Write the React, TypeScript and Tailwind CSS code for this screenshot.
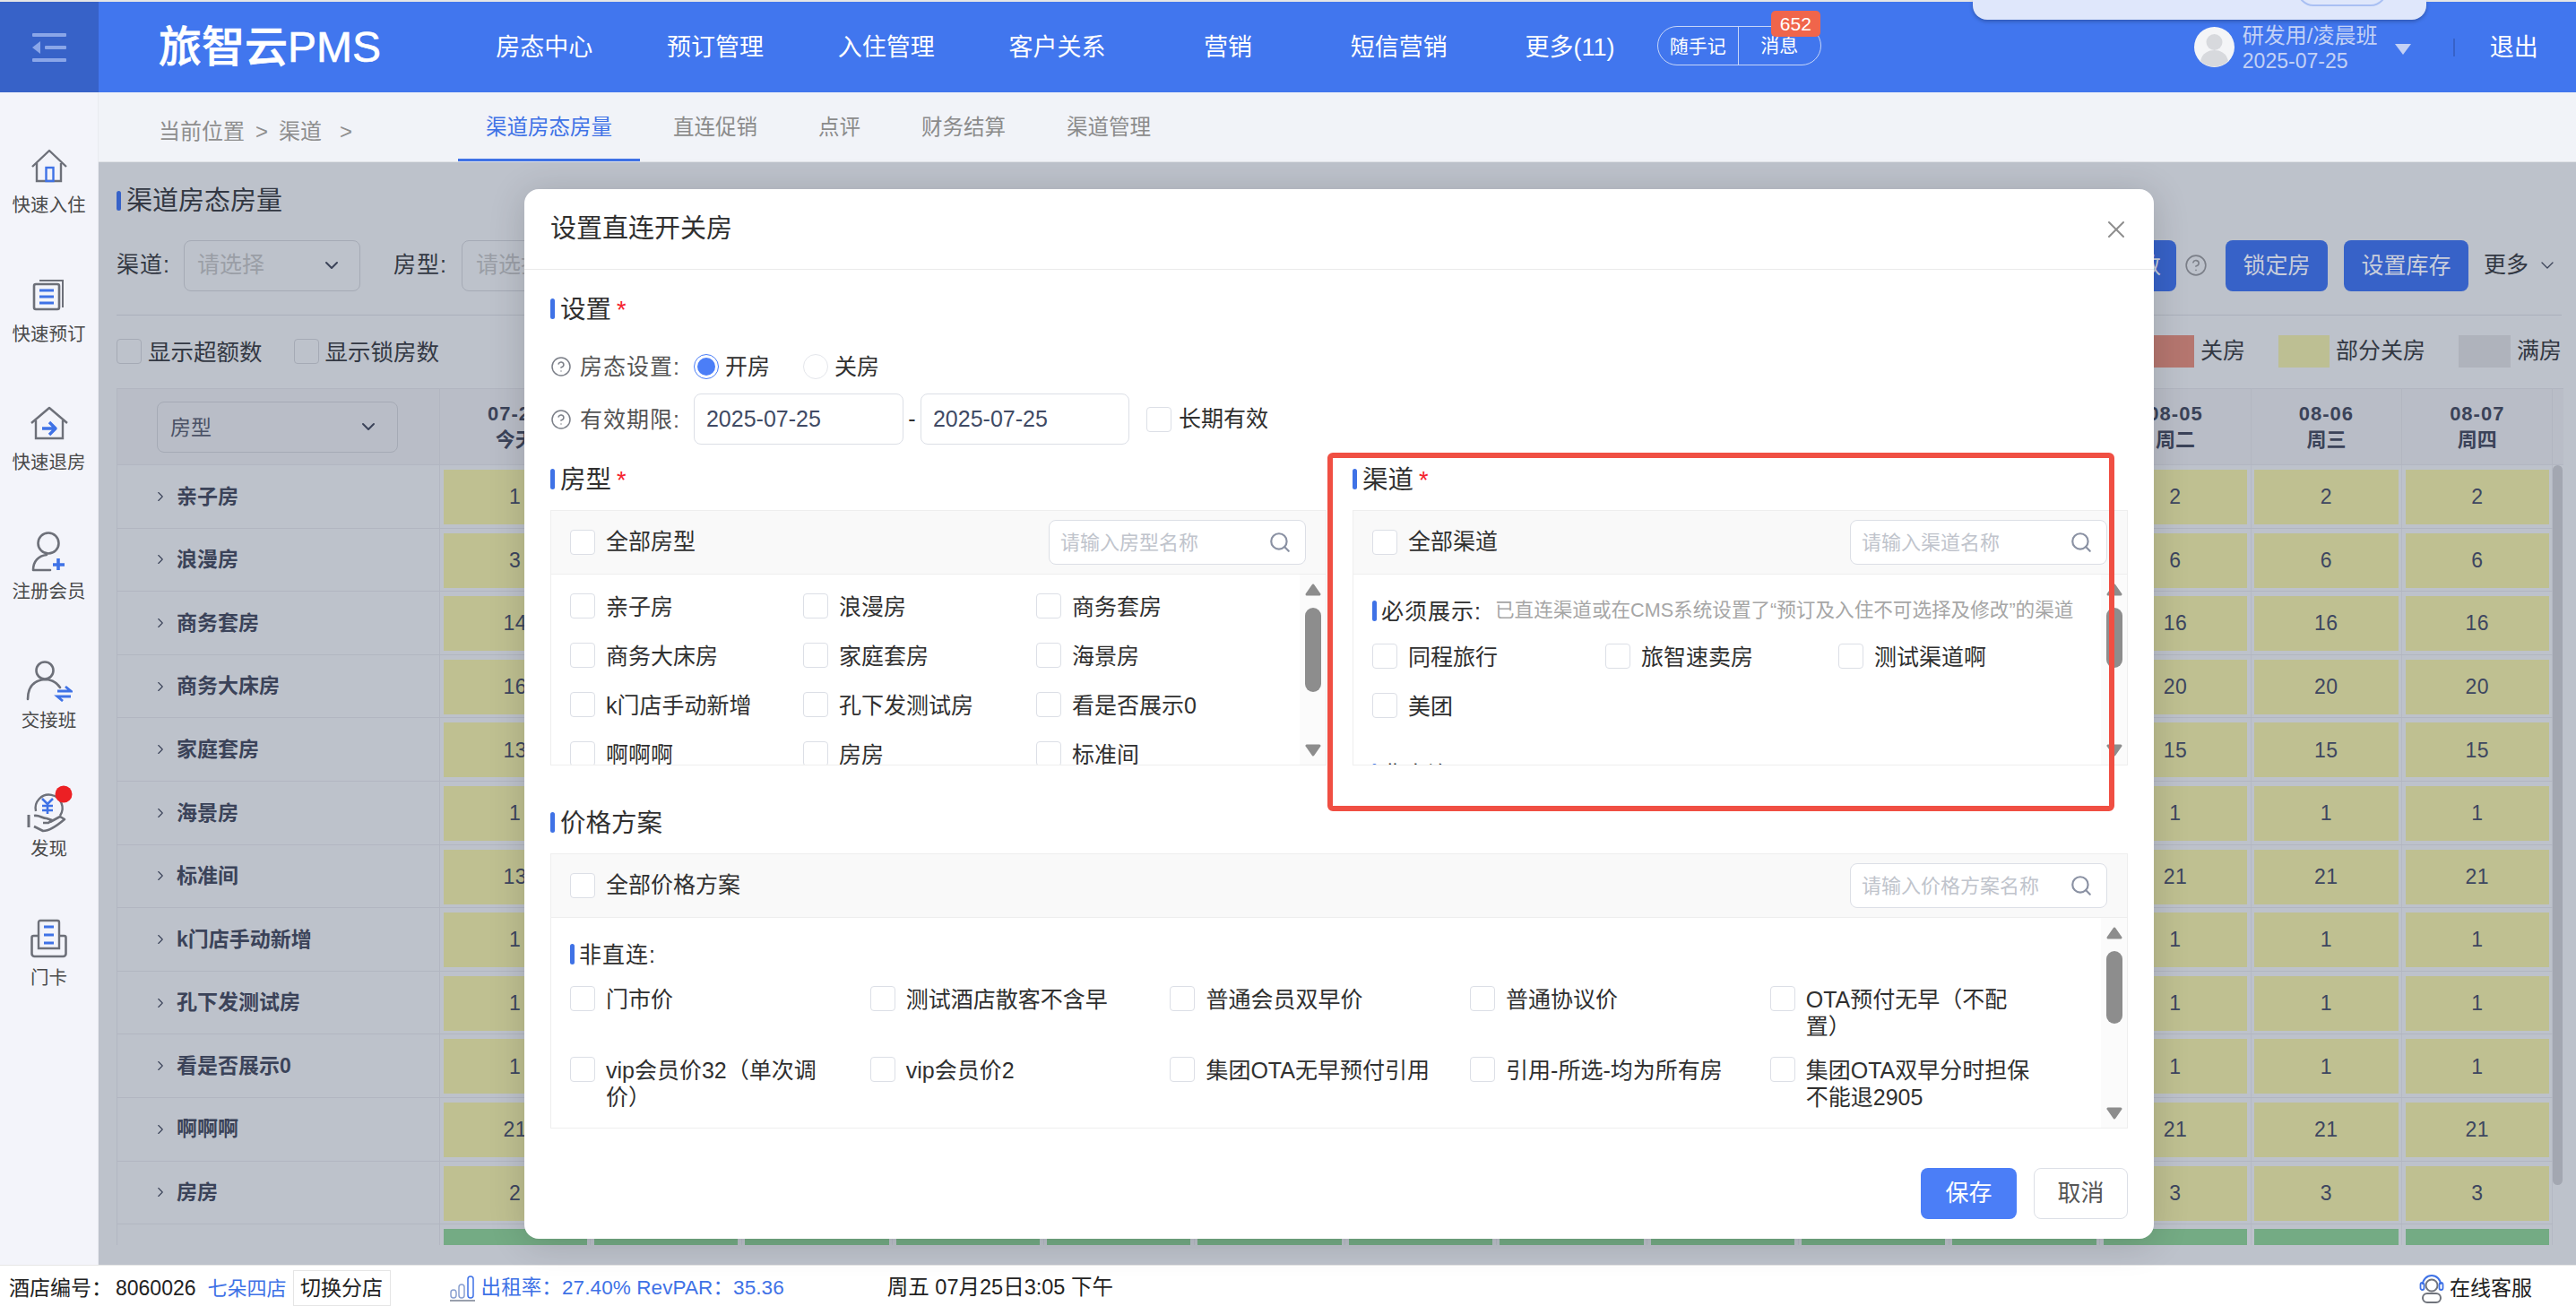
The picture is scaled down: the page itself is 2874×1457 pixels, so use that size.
import React from 'react';
import { ChevronDown, ChevronRight, CircleHelp, Search, X } from 'lucide-react';

const gray = '#6d7079';
const blue = '#3f72e6';

const HomeIcon = () => (
  <svg width="42" height="38" viewBox="0 0 42 38" fill="none">
    <path d="M2 20 21 2l19 18" stroke={gray} strokeWidth="2.4" strokeLinejoin="round" />
    <path d="M7 16v20h27V16" stroke={gray} strokeWidth="2.4" />
    <rect x="17.5" y="21" width="8" height="15" stroke={blue} strokeWidth="2.4" />
  </svg>
);

const BookIcon = () => (
  <svg width="38" height="36" viewBox="0 0 38 36" fill="none">
    <path d="M8 2h26v30" stroke={gray} strokeWidth="2" />
    <rect x="2" y="6" width="28" height="28" rx="2" stroke={gray} strokeWidth="2.6" />
    <path d="M8 13h16M8 20h16M8 27h16" stroke={blue} strokeWidth="3" />
  </svg>
);

const CheckoutIcon = () => (
  <svg width="44" height="38" viewBox="0 0 44 38" fill="none">
    <path d="M2 19 22 2l20 17" stroke={gray} strokeWidth="2.4" strokeLinejoin="round" />
    <path d="M7 16v20h30V16" stroke={gray} strokeWidth="2.4" />
    <path d="M14 25h13M22 18l7 7-7 7" stroke={blue} strokeWidth="3.4" strokeLinejoin="round" />
  </svg>
);

const UserPlusIcon = () => (
  <svg width="40" height="46" viewBox="0 0 40 46" fill="none">
    <circle cx="19" cy="13" r="11.5" stroke={gray} strokeWidth="2.6" />
    <path d="M2 43c0-10 6-16 15-17M2 43h19" stroke={gray} strokeWidth="2.6" strokeLinecap="round" />
    <path d="M30 30v13M24 37h13" stroke={blue} strokeWidth="3.6" />
  </svg>
);

const UserSwapIcon = () => (
  <svg width="52" height="46" viewBox="0 0 52 46" fill="none">
    <circle cx="21" cy="11" r="9.5" stroke={gray} strokeWidth="2.6" />
    <path d="M2 43c0-14 7-21 19-22 7 0 13 3 17 9" stroke={gray} strokeWidth="2.6" strokeLinecap="round" />
    <path d="M35 34h15l-6-5M50 40H35l6 5" stroke={blue} strokeWidth="2.8" />
  </svg>
);

const DiscoverIcon = () => (
  <svg width="52" height="54" viewBox="0 0 52 54" fill="none">
    <path d="M11 29a15 15 0 1 1 27 5" stroke={gray} strokeWidth="2.4" />
    <path d="M18 15l6 6 6-6M24 21v11M18 23h12M18 28h12" stroke={blue} strokeWidth="2.6" />
    <path d="M3 33v14" stroke={gray} strokeWidth="3" />
    <path d="M9 34c6-1 9 3 14 3l6 2-4 3h-6M9 46l10 5c7 0 17-7 24-13l-5-3-11 6" stroke={gray} strokeWidth="2.6" strokeLinejoin="round" />
    <circle cx="42" cy="10" r="9.5" fill="#ec2024" />
  </svg>
);

const CardIcon = () => (
  <svg width="44" height="44" viewBox="0 0 44 44" fill="none">
    <path d="M10 19H4.500a2 2 0 0 0-2 2v18a3 3 0 0 0 3 3h32a3 3 0 0 0 3-3V21a2 2 0 0 0-2-2H33" stroke={gray} strokeWidth="2.6" />
    <path d="M10 33V4a2 2 0 0 1 2-2h19a2 2 0 0 1 2 2v29z" stroke={gray} strokeWidth="2.4" />
    <path d="M16 9h11M16 18h11M16 27h11" stroke={blue} strokeWidth="3.2" />
  </svg>
);

const Avatar = () => (
  <svg width="45" height="45" viewBox="0 0 45 45" className="shrink-0">
    <circle cx="22.500" cy="22.500" r="22.500" fill="#f4f5f7" />
    <circle cx="22.500" cy="17" r="9" fill="#d7d9dd" />
    <path d="M7 38c2-9 9-12 15.500-12S36 29 38 38a22 22 0 0 1-31 0z" fill="#d7d9dd" />
  </svg>
);

const BarsIcon = () => (
  <svg width="30" height="30" viewBox="0 0 30 30" fill="none">
    <rect x="2" y="17" width="6" height="9" rx="3" stroke="#8aa0d0" strokeWidth="1.500" />
    <rect x="11" y="11" width="6" height="15" rx="3" stroke="#8aa0d0" strokeWidth="1.500" />
    <rect x="21" y="2" width="6" height="24" rx="3" stroke={blue} strokeWidth="1.500" />
    <path d="M1 29h28" stroke="#9aa0ad" strokeWidth="2" />
  </svg>
);

const HeadsetIcon = () => (
  <svg width="28" height="34" viewBox="0 0 28 34" fill="none">
    <path d="M4 13a10 10 0 0 1 20 0" stroke={blue} strokeWidth="2" />
    <rect x="1.500" y="11" width="4" height="8" rx="2" stroke={blue} strokeWidth="1.800" />
    <rect x="22.500" y="11" width="4" height="8" rx="2" stroke={blue} strokeWidth="1.800" />
    <circle cx="14" cy="14" r="6.500" stroke="#70747c" strokeWidth="2" />
    <rect x="4" y="23" width="20" height="10" rx="5" stroke="#70747c" strokeWidth="2" />
  </svg>
);

const sideItems = [
  { label: '快速入住', icon: <HomeIcon /> },
  { label: '快速预订', icon: <BookIcon /> },
  { label: '快速退房', icon: <CheckoutIcon /> },
  { label: '注册会员', icon: <UserPlusIcon /> },
  { label: '交接班', icon: <UserSwapIcon /> },
  { label: '发现', icon: <DiscoverIcon /> },
  { label: '门卡', icon: <CardIcon /> },
];

const navItems = ['房态中心', '预订管理', '入住管理', '客户关系', '营销', '短信营销', '更多(11)'];
const tabs = ['直连促销', '点评', '财务结算', '渠道管理'];

const dates = [
  ['07-25', '今天'], ['07-26', '周六'], ['07-27', '周日'], ['07-28', '周一'], ['07-29', '周二'],
  ['07-30', '周三'], ['07-31', '周四'], ['08-01', '周五'], ['08-02', '周六'], ['08-03', '周日'],
  ['08-04', '周一'], ['08-05', '周二'], ['08-06', '周三'], ['08-07', '周四'],
];

const tableRows: [string, number, number][] = [
  ['亲子房', 1, 2],
  ['浪漫房', 3, 6],
  ['商务套房', 14, 16],
  ['商务大床房', 16, 20],
  ['家庭套房', 13, 15],
  ['海景房', 1, 1],
  ['标准间', 13, 21],
  ['k门店手动新增', 1, 1],
  ['孔下发测试房', 1, 1],
  ['看是否展示0', 1, 1],
  ['啊啊啊', 21, 21],
  ['房房', 2, 3],
];

const roomTypes = ['亲子房', '浪漫房', '商务套房', '商务大床房', '家庭套房', '海景房', 'k门店手动新增', '孔下发测试房', '看是否展示0', '啊啊啊', '房房', '标准间'];
const priceRows = ['门市价', '测试酒店散客不含早', '普通会员双早价', '普通协议价', 'OTA预付无早（不配置）', 'vip会员价32（单次调价）', 'vip会员价2', '集团OTA无早预付引用', '引用-所选-均为所有房', '集团OTA双早分时担保不能退2905'];

const Check = ({ className = '' }: { className?: string }) => (
  <span className={`block w-[28px] h-[28px] shrink-0 rounded-[4px] border border-[#dcdfe6] bg-white ${className}`} />
);

const SectionTitle = ({ text, required }: { text: string; required?: boolean }) => (
  <div className="flex items-center h-[40px]">
    <span className="w-[5px] h-[23px] rounded-[3px] bg-[#3f72e6]" />
    <span className="ml-[6px] pt-[2px] text-[28.500px] text-[#303030] leading-[40px]">{text}</span>
    {required && <span className="ml-[6px] mt-[5px] text-[27px] text-[#f5222d] leading-none">*</span>}
  </div>
);

const SubTitle = ({ text }: { text: string }) => (
  <div className="flex items-center h-[28px]">
    <span className="w-[5px] h-[23px] rounded-[3px] bg-[#3f72e6]" />
    <span className="ml-[5px] pt-[2px] text-[25px] tracking-[1px] text-[#303030] leading-[28px]">{text}</span>
  </div>
);

const Triangle = ({ down }: { down?: boolean }) => (
  <svg width="18" height="14" viewBox="0 0 18 14" className={down ? 'rotate-180' : ''}>
    <path d="M9 2 16 12H2z" fill="#8d8d8d" stroke="#8d8d8d" strokeWidth="3" strokeLinejoin="round" />
  </svg>
);

const ScrollTrack = ({ thumb }: { thumb: string }) => (
  <div className="w-[29px] shrink-0 bg-[#fbfbfb] flex flex-col items-center pt-[10px] pb-[9px]">
    <Triangle />
    <span className={`w-[18px] mt-[13px] rounded-full bg-[#8d8d8d] ${thumb}`} />
    <span className="mt-auto"><Triangle down /></span>
  </div>
);

const BoxHeader = ({ label, placeholder }: { label: string; placeholder: string }) => (
  <div className="flex items-center h-[71px] shrink-0 bg-[#f9f9f9] border-b border-[#eeeeee] pl-[21px] pr-[22px]">
    <Check />
    <span className="ml-[12px] text-[25px] text-[#303030]">{label}</span>
    <div className="ml-auto flex items-center w-[287px] h-[50px] rounded-[8px] border border-[#dcdfe6] bg-white pl-[12px] pr-[15px]">
      <span className="text-[22px] text-[#c0c4cc]">{placeholder}</span>
      <Search className="ml-auto" size={26} color="#8a91a3" strokeWidth={2} />
    </div>
  </div>
);

const OptionRow = ({ items }: { items: string[] }) => (
  <div className="grid grid-cols-[260px_260px_260px] h-[55px]">
    {items.map((item) => (
      <div key={item} className="flex items-start gap-[12px]">
        <Check />
        <span className="pt-[1px] text-[25px] leading-[28px] text-[#303030] whitespace-nowrap">{item}</span>
      </div>
    ))}
  </div>
);

const Modal = () => (
  <div className="absolute left-[585px] top-[211px] w-[1818px] h-[1171px] rounded-[16px] bg-white shadow-[0_4px_40px_rgba(0,0,0,0.16)] flex flex-col">
    <div className="flex items-center justify-between h-[90px] shrink-0 border-b border-[#ebebeb] pl-[29px] pr-[26px]">
      <span className="text-[29px] text-[#303030]">设置直连开关房</span>
      <X size={32} color="#8e8e8e" strokeWidth={1.5} />
    </div>
    <div className="px-[29px] pt-[23px] flex flex-col">
      <SectionTitle text="设置" required />
      <div className="flex items-center h-[40px] mt-[25px] text-[25px] text-[#303030]">
        <CircleHelp size={24} color="#7b7f88" strokeWidth={1.5} />
        <span className="ml-[9px] pt-[2px] tracking-[1px] text-[#555555]">房态设置:</span>
        <span className="ml-[15px] w-[28px] h-[28px] rounded-full border border-[#4b7ef7] flex items-center justify-center">
          <span className="w-[20px] h-[20px] rounded-full bg-[#4b7ef7]" />
        </span>
        <span className="ml-[7px] pt-[2px]">开房</span>
        <span className="ml-[37px] w-[28px] h-[28px] rounded-full border border-[#e4e6eb]" />
        <span className="ml-[7px] pt-[2px]">关房</span>
      </div>
      <div className="flex items-center h-[57px] mt-[10px] text-[25px]">
        <CircleHelp size={24} color="#7b7f88" strokeWidth={1.5} />
        <span className="ml-[9px] pt-[2px] tracking-[1px] text-[#555555]">有效期限:</span>
        <span className="ml-[15px] w-[234px] h-[57px] rounded-[8px] border border-[#dcdfe6] pl-[13px] leading-[55px] text-[#404a64]">2025-07-25</span>
        <span className="w-[19px] text-center text-[#303030]">-</span>
        <span className="w-[233px] h-[57px] rounded-[8px] border border-[#dcdfe6] pl-[13px] leading-[55px] text-[#404a64]">2025-07-25</span>
        <Check className="ml-[19px]" />
        <span className="ml-[8px] text-[#303030]">长期有效</span>
      </div>
      <div className="flex gap-[29px] mt-[18px]">
        <div className="w-[866px]">
          <SectionTitle text="房型" required />
          <div className="mt-[15px] h-[285px] border border-[#eeeeee] flex flex-col">
            <BoxHeader label="全部房型" placeholder="请输入房型名称" />
            <div className="flex flex-1 min-h-0">
              <div className="flex-1 overflow-hidden pl-[21px] pt-[21px]">
                <OptionRow items={roomTypes.slice(0, 3)} />
                <OptionRow items={roomTypes.slice(3, 6)} />
                <OptionRow items={roomTypes.slice(6, 9)} />
                <OptionRow items={roomTypes.slice(9, 12)} />
              </div>
              <ScrollTrack thumb="h-[94px]" />
            </div>
          </div>
        </div>
        <div className="w-[865px]">
          <SectionTitle text="渠道" required />
          <div className="mt-[15px] h-[285px] border border-[#eeeeee] flex flex-col">
            <BoxHeader label="全部渠道" placeholder="请输入渠道名称" />
            <div className="flex flex-1 min-h-0">
              <div className="flex-1 overflow-hidden pl-[21px] pt-[26px]">
                <div className="flex items-center h-[28px]">
                  <SubTitle text="必须展示:" />
                  <span className="ml-[15px] text-[21.600px] leading-[28px] text-[#a6a6a6] whitespace-nowrap">已直连渠道或在CMS系统设置了“预订及入住不可选择及修改”的渠道</span>
                </div>
                <div className="mt-[23px]">
                  <OptionRow items={['同程旅行', '旅智速卖房', '测试渠道啊']} />
                  <OptionRow items={['美团']} />
                </div>
                <div className="mt-[21px]">
                  <SubTitle text="非直连:" />
                </div>
              </div>
              <ScrollTrack thumb="h-[67px]" />
            </div>
          </div>
        </div>
      </div>
      <div className="mt-[43px]">
        <SectionTitle text="价格方案" />
      </div>
      <div className="mt-[15px] h-[307px] border border-[#eeeeee] flex flex-col">
        <BoxHeader label="全部价格方案" placeholder="请输入价格方案名称" />
        <div className="flex flex-1 min-h-0">
          <div className="flex-1 overflow-hidden pl-[21px] pt-[26px]">
            <SubTitle text="非直连:" />
            <div className="grid grid-cols-[repeat(5,334.700px)] auto-rows-[79px] mt-[22px]">
              {priceRows.map((item) => (
                <div key={item} className="flex items-start gap-[12px]">
                  <Check />
                  <span className="w-[255px] text-[25px] leading-[30px] text-[#303030]">{item}</span>
                </div>
              ))}
            </div>
          </div>
          <ScrollTrack thumb="h-[81px]" />
        </div>
      </div>
      <div className="flex justify-end gap-[19px] mt-[44px]">
        <button className="w-[107px] h-[57px] rounded-[8px] bg-[#4b7ef7] text-[26px] text-white">保存</button>
        <button className="w-[105px] h-[57px] rounded-[8px] border border-[#dcdfe6] text-[26px] text-[#555555]">取消</button>
      </div>
    </div>
  </div>
);

const GridRow = ({ name, first, last }: { name: string; first: number; last: number }) => (
  <div className="flex h-[70.600px] border-b border-[#b2b6c1]">
    <div className="w-[360px] shrink-0 flex items-center pl-[39px] border-r border-[#b2b6c1] text-[#3b4359]">
      <ChevronRight size={18} strokeWidth={1.5} color="#3b4359" />
      <span className="ml-[9px] text-[23px] font-bold whitespace-nowrap">{name}</span>
    </div>
    {dates.map(([d], i) => (
      <div key={d} className="w-[168.400px] shrink-0 px-[3.500px] pt-[5px] border-r border-[#b5b9c4] first:px-[4px]">
        <div className="h-[61px] bg-[#bfc091] flex items-center justify-center text-[23px] tracking-[0.5px] text-[#3d4660]">
          {i === 0 ? first : last}
        </div>
      </div>
    ))}
  </div>
);

const RoomGrid = () => (
  <div className="w-[2730px] mt-[23px] border-l border-t border-[#b2b6c1]">
    <div className="flex h-[85px] bg-[#b9bdc7] border-b border-[#b2b6c1]">
      <div className="w-[360px] shrink-0 flex items-center pl-[44px] border-r border-[#b2b6c1]">
        <div className="flex items-center w-[269px] h-[57px] rounded-[8px] border border-[#a5aab5] pl-[14px] pr-[20px] text-[23px] text-[#4b5266]">
          <span className="pt-[2px]">房型</span>
          <ChevronDown className="ml-auto" size={24} color="#3b4359" strokeWidth={2} />
        </div>
      </div>
      {dates.map(([d, w]) => (
        <div key={d} className="w-[168.400px] shrink-0 flex flex-col items-center justify-center border-r border-[#b2b6c1] font-bold text-[#3b4359] text-[22px] leading-[29px]">
          <span className="tracking-[1px]">{d}</span>
          <span>{w}</span>
        </div>
      ))}
    </div>
    <div className="flex h-[870px] overflow-hidden">
      <div className="w-[2717px] shrink-0">
        {tableRows.map(([name, first, last]) => (
          <GridRow key={name} name={name} first={first} last={last} />
        ))}
        <div className="flex h-[70.600px]">
          <div className="w-[360px] shrink-0 border-r border-[#b2b6c1]" />
          {dates.map(([d]) => (
            <div key={d} className="w-[168.400px] shrink-0 px-[3.500px] pt-[5px] border-r border-[#b5b9c4]">
              <div className="h-[61px] bg-[#74ab84]" />
            </div>
          ))}
        </div>
      </div>
      <div className="w-[11px] h-[803px] shrink-0 rounded-full bg-[#a3a7b1]" />
    </div>
  </div>
);

export default function App() {
  return (
    <div className="relative w-[2874px] h-[1457px] overflow-hidden flex flex-col bg-white font-['Liberation_Sans','Noto_Sans_CJK_SC',sans-serif]">
      <div className="h-[2px] shrink-0 bg-[#e6e6e6]" />
      <header className="relative h-[101px] shrink-0 flex items-center bg-[#4176ee] text-white">
        <div className="w-[110px] h-full bg-[#3762c8] flex items-center justify-center">
          <svg width="40" height="32" viewBox="0 0 40 32" fill="#8aa6e8">
            <rect x="1" y="0" width="38" height="4" rx="1" />
            <rect x="15" y="14" width="24" height="4" rx="1" />
            <rect x="1" y="28" width="38" height="4" rx="1" />
            <path d="M10 9v14L1 16z" />
          </svg>
        </div>
        <span className="ml-[67px] w-[248px] text-[48px] font-medium leading-none whitespace-nowrap [-webkit-text-stroke:0.6px_white]">旅智云PMS</span>
        <nav className="ml-[87px] pt-[2px] flex text-[27px]">
          {navItems.map((n) => (
            <span key={n} className="w-[190.700px] text-center whitespace-nowrap">{n}</span>
          ))}
        </nav>
        <div className="relative ml-[2px] -mt-[3px] w-[183px] h-[44px] rounded-full border border-[#c7d6f8] flex items-center text-[21px]">
          <span className="w-[90px] h-full border-r border-[#c7d6f8] text-center leading-[44px]">随手记</span>
          <span className="flex-1 text-center leading-[44px]">消息</span>
          <span className="absolute left-[126px] -top-[18px] w-[55px] h-[29px] rounded-[5px] bg-[#f0654b] text-center text-[21px] leading-[29px]">652</span>
        </div>
        <div className="ml-[416px] flex items-center">
          <Avatar />
          <div className="ml-[9px] w-[170px] mt-[3px] text-[#c3d1f5] leading-[28px]">
            <div className="text-[24px] whitespace-nowrap">研发用/凌晨班</div>
            <div className="text-[23px]">2025-07-25</div>
          </div>
          <svg width="18" height="12" viewBox="0 0 18 12" className="mt-[4px]"><path d="M0 0h18L9 12z" fill="#c3d1f5" /></svg>
          <span className="ml-[47px] w-[2px] h-[20px] bg-[#3762c8]" />
          <span className="ml-[39px] pt-[2px] text-[27px] whitespace-nowrap">退出</span>
        </div>
        <div className="absolute left-[2201px] -top-[2px] w-[506px] h-[22px] rounded-b-[16px] bg-[#dfe7fb] shadow-[0_2px_4px_rgba(0,0,0,0.25)]">
          <span className="absolute left-[362px] -top-[30px] w-[100px] h-[37px] rounded-[18px] border-2 border-[#a9c0f3]" />
        </div>
      </header>
      <div className="flex flex-1 min-h-0">
        <aside className="w-[110px] shrink-0 bg-[#f3f4fa] pt-[57px] border-r border-[#e9ebf0]">
          {sideItems.map((s) => (
            <div key={s.label} className="h-[143.670px] flex flex-col items-center">
              <div className="h-[50px] flex items-center justify-center">{s.icon}</div>
              <span className="mt-[6px] text-[20.500px] leading-[26px] text-[#4a4a4a] whitespace-nowrap">{s.label}</span>
            </div>
          ))}
        </aside>
        <main className="flex-1 min-w-0 flex flex-col">
          <div className="h-[78px] shrink-0 flex bg-[#f1f3f8] border-b border-[#dfe1e6]">
            <div className="w-[401px] shrink-0 pl-[67px] pt-[10px] flex items-center text-[24px] text-[#8e8e8e] whitespace-nowrap">
              当前位置
              <span className="ml-[12px] mr-[12px]">&gt;</span>
              渠道
              <span className="ml-[20px]">&gt;</span>
            </div>
            <div className="ml-[31px] pt-[2px] flex items-center gap-[68px] text-[23.500px] text-[#8b8b8b] whitespace-nowrap">
              <span className="relative h-full flex items-center text-[#3f72e6]">
                渠道房态房量
                <span className="absolute -left-[31px] -right-[31px] bottom-0 h-[3px] bg-[#3f72e6]" />
              </span>
              {tabs.map((t) => (
                <span key={t}>{t}</span>
              ))}
            </div>
          </div>
          <div className="flex-1 min-h-0 bg-[#bdc2cb] pl-[20px] pr-[16px] pt-[28px] text-[25px] text-[#333843]">
            <div className="flex items-center h-[30px]">
              <span className="w-[5px] h-[22px] rounded-[3px] bg-[#3762c8]" />
              <span className="ml-[6px] pt-[2px] text-[29px] whitespace-nowrap">渠道房态房量</span>
            </div>
            <div className="flex items-center h-[85px] mt-[28px] pb-[26px] border-b border-[#abb0bb] box-border">
              <span className="tracking-[1px]">渠道:</span>
              <div className="ml-[15px] flex items-center w-[197px] h-[57px] rounded-[8px] border border-[#a5aab5] pl-[14px] pr-[19px] text-[#9a9ea6]">
                请选择
                <ChevronDown className="ml-auto" size={24} color="#3b4359" strokeWidth={2} />
              </div>
              <span className="ml-[37px] tracking-[1px]">房型:</span>
              <div className="ml-[16px] flex items-center w-[197px] h-[57px] rounded-[8px] border border-[#a5aab5] pl-[15px] text-[#9a9ea6]">请选择</div>
              <div className="ml-auto flex items-center pr-[4px] text-[#c9cedb]">
                <span className="w-[150px] h-[57px] rounded-[8px] bg-[#3762c8] text-right pr-[17px] leading-[57px]">超额数</span>
                <CircleHelp className="ml-[9px]" size={26} color="#7b7f88" strokeWidth={1.5} />
                <span className="ml-[20px] w-[114px] h-[57px] rounded-[8px] bg-[#3762c8] text-center leading-[57px]">锁定房</span>
                <span className="ml-[18px] w-[139px] h-[57px] rounded-[8px] bg-[#3762c8] text-center leading-[57px]">设置库存</span>
                <span className="ml-[17px] text-[#333843]">更多</span>
                <ChevronDown className="ml-[9px]" size={24} color="#3b4359" strokeWidth={1.3} />
              </div>
            </div>
            <div className="flex items-center h-[36px] mt-[22px]">
              <span className="w-[28px] h-[28px] rounded-[4px] border border-[#a5aab5]" />
              <span className="ml-[7px] pt-[2px] text-[25.500px]">显示超额数</span>
              <span className="ml-[35px] w-[28px] h-[28px] rounded-[4px] border border-[#a5aab5]" />
              <span className="ml-[7px] pt-[2px] text-[25.500px]">显示锁房数</span>
              <div className="ml-auto flex items-center">
                <span className="w-[57px] h-[36px] bg-[#b5766f]" />
                <span className="ml-[7px]">关房</span>
                <span className="ml-[37px] w-[57px] h-[36px] bg-[#bdbf93]" />
                <span className="ml-[7px]">部分关房</span>
                <span className="ml-[37px] w-[58px] h-[36px] bg-[#afb3bc]" />
                <span className="ml-[7px]">满房</span>
              </div>
            </div>
            <RoomGrid />
          </div>
        </main>
      </div>
      <footer className="h-[46px] shrink-0 flex items-center bg-white border-t border-[#e6e6e6] pt-[5px] pl-[10px] pr-[49px] text-[23px] text-[#222222] whitespace-nowrap">
        <span>酒店编号：</span>
        <span className="ml-[4px]">8060026</span>
        <span className="ml-[13px] text-[22px] text-[#3f72e6]">七朵四店</span>
        <span className="ml-[7px] w-[109px] h-full border border-[#e5e5e5] flex items-center justify-center">切换分店</span>
        <span className="ml-[65px]"><BarsIcon /></span>
        <span className="ml-[6px] text-[22.500px] tracking-[0.1px] text-[#3f72e6]">出租率：27.40% RevPAR：35.36</span>
        <span className="ml-[115px] text-[23.500px]">周五 07月25日3:05 下午</span>
        <span className="ml-auto flex items-center gap-[6px]"><HeadsetIcon />在线客服</span>
      </footer>
      <Modal />
      <div className="absolute left-[1481px] top-[505px] w-[878px] h-[400px] rounded-[6px] border-[6px] border-[#f04f43]" />
    </div>
  );
}
